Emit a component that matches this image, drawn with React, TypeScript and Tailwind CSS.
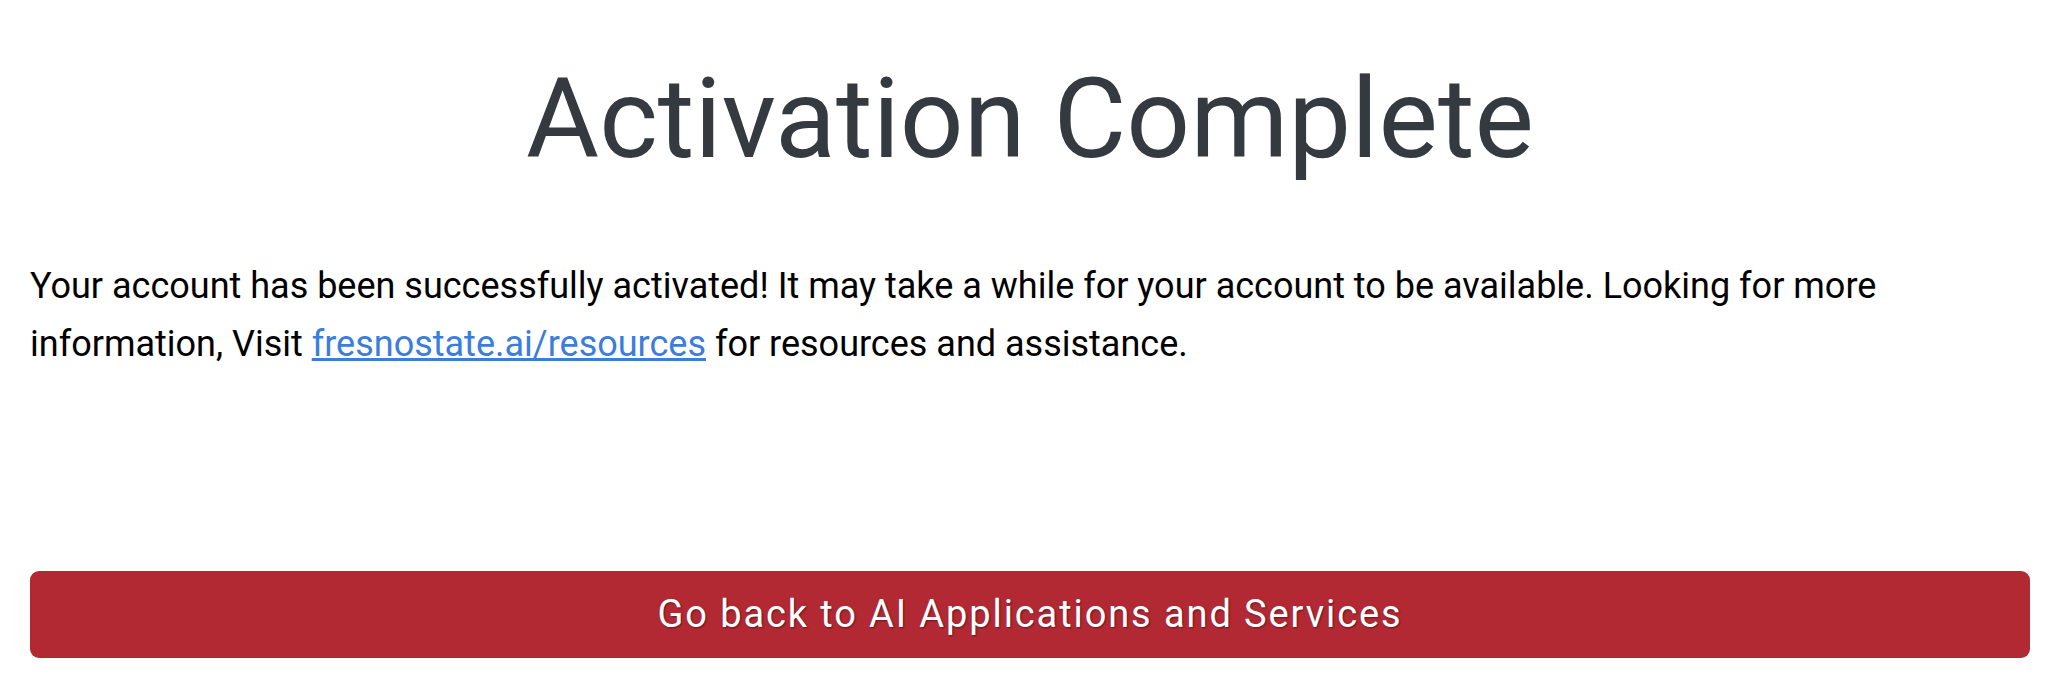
import React from "react";

export default function App() {
  return (
    <div className="min-h-[696px] w-full bg-white pl-[30px] pr-[22px] pt-[52px] font-['Roboto',sans-serif]">
      <h1 className="m-0 text-center text-[112px] font-normal leading-[1.2] text-[#343a40]">
        Activation Complete
      </h1>
      <p className="mt-[72px] text-[36px] leading-[1.6] text-black">
        Your account has been successfully activated! It may take a while for your account to be available. Looking for more information, Visit{" "}
        <a href="#" className="text-[#3b7ddd] underline">
          fresnostate.ai/resources
        </a>{" "}
        for resources and assistance.
      </p>
      <button className="mt-[197px] block w-full rounded-[9px] bg-[#b22934] py-[15px] text-center text-[38px] leading-[1.5] tracking-[1.9px] text-white [text-shadow:1px_1px_2px_rgba(0,0,0,0.45)]">
        Go back to AI Applications and Services
      </button>
    </div>
  );
}
